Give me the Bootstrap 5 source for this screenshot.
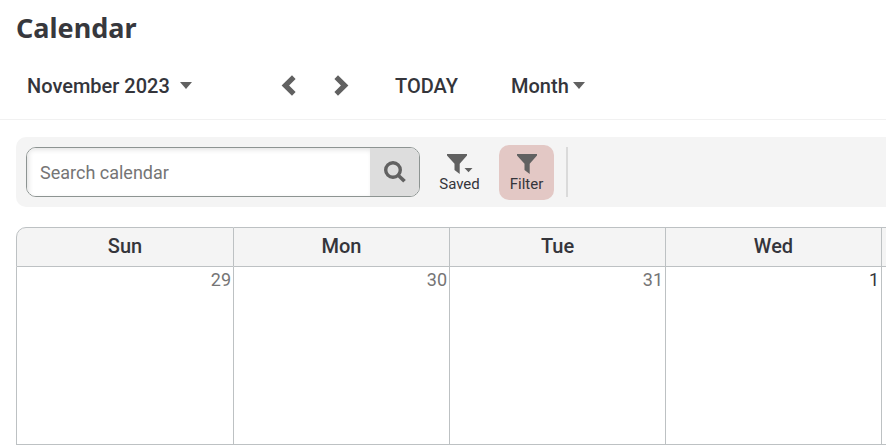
<!DOCTYPE html>
<html lang="en">
<head>
<meta charset="utf-8">
<meta name="viewport" content="width=device-width, initial-scale=1">
<title>Calendar</title>
<link href="https://cdn.jsdelivr.net/npm/bootstrap@5.3.0/dist/css/bootstrap.min.css" rel="stylesheet">
<style>
body { font-family: Roboto, "Liberation Sans", sans-serif; font-size: 18px; line-height: 24px; color: #34353b; }
button { color: inherit; }
svg { fill: #616161; display: block; }
.page-title { font: 700 27px/40px "Noto Sans", sans-serif; padding-top: 8px; color: #37383d; }
.date-bar { height: 72px; border-bottom: 1px solid #f1f1f1; padding: 4px 16px 0 27px; }
.plain-btn { background: none; border: 0; padding: 0; font-weight: 500; font-size: 20px; display: flex; align-items: center; white-space: nowrap; }
.month-picker { width: 254px; gap: 10px; }
.step-btns { width: 114px; gap: 38px; }
.today-btn { width: 116px; }
.view-btn { gap: 4px; }
.tools { height: 70px; margin: 17px 0 20px 16px; padding: 0 10px; background: #f4f4f4; border-radius: 10px 0 0 10px; }
.search-box { width: 394px; height: 50px; border: 1px solid #8d9492; border-radius: 10px; overflow: hidden; background: #fff; }
.search-box .form-control { border: 0; border-radius: 0; padding: 0 13px; font-size: 18px; box-shadow: inset 2px 2px 5px #0000001c; }
.search-box .form-control::placeholder { color: #757575; }
.search-box .search-btn { width: 49px; border: 0; padding: 0; background: #ddd; display: grid; place-items: center; }
.tool-btn { width: 55px; height: 55px; border: 0; border-radius: 10px; padding: 0 0 7px; background: none; font-size: 15px; line-height: 18px; display: flex; flex-direction: column; align-items: center; justify-content: flex-end; }
.tool-btn.chosen { background: #e3c8c5; }
.tool-group { padding-left: 12px; gap: 12px; }
.tools-rule { width: 2px; height: 50px; background: #dadada; }
.month-wrap { margin-left: 16px; }
.month-grid { width: 100%; table-layout: fixed; border-collapse: separate; border-spacing: 0; }
.month-grid th, .month-grid td { border: solid #bdc1c3; border-width: 0 1px 1px 0; width: 216px; }
.month-grid th { height: 40px; border-top-width: 1px; background: #f4f4f4; text-align: center; font-weight: 500; font-size: 20px; padding: 0 0 2px; }
.month-grid td { height: 178px; padding: 1px 2px 0; text-align: right; vertical-align: top; }
.month-grid tr > :first-child { border-left-width: 1px; width: 218px; }
.month-grid tr > :last-child { border-right-width: 0; width: auto; padding: 0; }
.month-grid th:first-child { border-top-left-radius: 10px; }
.other-month { color: #757575; }
</style>
</head>
<body>
<h1 class="page-title ps-3 mb-0">Calendar</h1>
<nav class="date-bar d-flex align-items-center" aria-label="Calendar date">
  <button class="plain-btn month-picker" type="button">November 2023
    <svg width="12" height="7" viewBox="0 0 12 7" aria-hidden="true"><path d="M0 0h12L6 7z"/></svg>
  </button>
  <div class="step-btns d-flex">
    <button class="plain-btn" type="button" aria-label="Previous month">
      <svg width="15" height="21" viewBox="0 0 15 21" aria-hidden="true"><path d="M11 0.300l3.600 3.600-6.500 6.600 6.500 6.600-3.600 3.600L.6 10.500z"/></svg>
    </button>
    <button class="plain-btn" type="button" aria-label="Next month">
      <svg width="15" height="21" viewBox="0 0 15 21" aria-hidden="true"><path d="M4 0.300L.4 3.900l6.500 6.600-6.500 6.600L4 20.700l10.400-10.200z"/></svg>
    </button>
  </div>
  <button class="plain-btn today-btn" type="button">TODAY</button>
  <button class="plain-btn view-btn" type="button">Month
    <svg width="12" height="7" viewBox="0 0 12 7" aria-hidden="true"><path d="M0 0h12L6 7z"/></svg>
  </button>
</nav>
<main>
  <div class="tools d-flex align-items-center">
    <form class="search-box d-flex" role="search">
      <input class="form-control" type="search" placeholder="Search calendar" aria-label="Search calendar">
      <button class="search-btn flex-shrink-0" type="button" aria-label="Search">
        <svg width="22" height="22" viewBox="0 0 22 22" aria-hidden="true"><circle cx="9" cy="9" r="7.300" fill="none" stroke="#616161" stroke-width="3.400"/><path d="M13 15.400l2.400-2.400 6.400 6-2.600 2.600z"/></svg>
      </button>
    </form>
    <div class="tool-group d-flex align-items-center">
      <button class="tool-btn" type="button">
        <svg width="28" height="22" viewBox="-1 0 28 22" aria-hidden="true"><path d="M0 1h20v1.400l-7.300 8.300V21L7.500 17v-6.300L0 2.400zM17.500 15h8l-4 4.300z"/></svg>
        Saved
      </button>
      <button class="tool-btn chosen" type="button" aria-pressed="true">
        <svg width="20" height="22" viewBox="0 0 20 22" aria-hidden="true"><path d="M0 1h20v1.400l-7.300 8.300V21L7.500 17v-6.300L0 2.400z"/></svg>
        Filter
      </button>
      <div class="tools-rule"></div>
    </div>
  </div>
  <div class="month-wrap">
    <table class="month-grid">
      <thead><tr><th scope="col">Sun</th><th scope="col">Mon</th><th scope="col">Tue</th><th scope="col">Wed</th><th></th></tr></thead>
      <tbody><tr><td class="other-month">29</td><td class="other-month">30</td><td class="other-month">31</td><td>1</td><td></td></tr></tbody>
    </table>
  </div>
</main>
<script src="https://cdn.jsdelivr.net/npm/bootstrap@5.3.0/dist/js/bootstrap.bundle.min.js"></script>
</body>
</html>
